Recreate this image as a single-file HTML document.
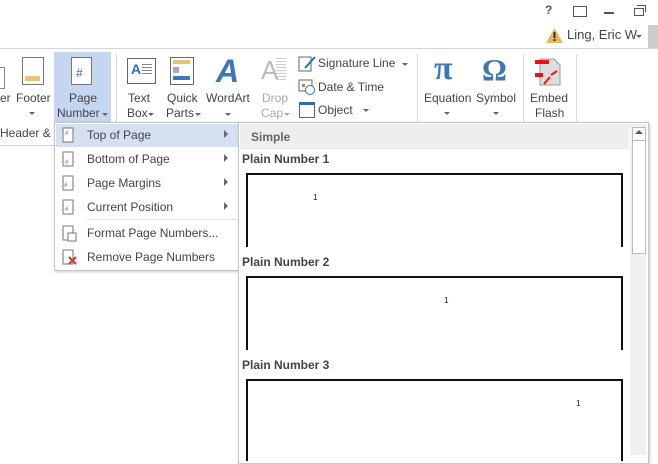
<!DOCTYPE html><html><head><style>
body{margin:0;width:658px;height:455px;position:relative;overflow:hidden;background:#fff;font-family:"Liberation Sans",sans-serif;font-size:12px;color:#444}
.a{position:absolute}
.t{position:absolute;font-size:12px;color:#444;white-space:nowrap}
.dd{position:absolute;width:0;height:0;border-left:3px solid transparent;border-right:3px solid transparent;border-top:3px solid #666}
</style></head><body>
<div class="t" style="left:545px;top:3px;font-weight:bold;color:#555">?</div>
<div class="a" style="left:573px;top:6px;width:12px;height:9px;border:1px solid #555"></div>
<div class="a" style="left:604px;top:12px;width:10px;height:2px;background:#555"></div>
<div class="a" style="left:634px;top:8px;width:8px;height:6px;border:1px solid #555"></div>
<div class="a" style="left:637px;top:5px;width:8px;height:6px;border-top:1px solid #555;border-right:1px solid #555"></div>
<svg class="a" style="left:546px;top:28px" width="17" height="15"><polygon points="8.5,0 17,15 0,15" fill="#e6b85c"/><rect x="7.5" y="4" width="2" height="6" fill="#333"/><rect x="7.5" y="11" width="2" height="2" fill="#333"/></svg>
<div class="t" style="left:567px;top:27px;font-size:13px">Ling, Eric W</div>
<div class="dd" style="left:636px;top:35px"></div>
<div class="a" style="left:648px;top:25px;width:10px;height:23px;background:#ccc"></div>
<div class="a" style="left:0;top:48px;width:658px;height:1px;background:#d4d4d4"></div>
<div class="a" style="left:54px;top:52px;width:57px;height:70px;background:#c5d7f0"></div>
<div class="a" style="left:0;top:67px;width:4px;height:20px;border:1px solid #888;border-left:none"></div>
<div class="t" style="left:0;top:91px">er</div>
<div class="a" style="left:22px;top:57px;width:20px;height:26px;border:1px solid #777;background:#fff"></div>
<div class="a" style="left:25px;top:76px;width:15px;height:5px;background:#e8c27a"></div>
<div class="t" style="left:16px;top:91px">Footer</div>
<div class="dd" style="left:29px;top:112px"></div>
<div class="a" style="left:71px;top:57px;width:19px;height:26px;border:1px solid #777;background:#fff"></div>
<div class="t" style="left:76px;top:66px;font-size:12px;color:#2e6db4">#</div>
<div class="t" style="left:69px;top:91px">Page</div>
<div class="t" style="left:57px;top:106px">Number</div>
<div class="dd" style="left:102px;top:113px"></div>
<div class="t" style="left:0;top:126px">Header &amp; F</div>
<div class="a" style="left:116px;top:54px;width:1px;height:68px;background:#ddd"></div>
<div class="a" style="left:127px;top:58px;width:27px;height:24px;border:1px solid #666;background:#fff"></div>
<div class="t" style="left:131px;top:61px;color:#2e6db4;font-size:14px;font-weight:bold">A</div>
<div class="a" style="left:142px;top:64px;width:10px;height:12px;background:repeating-linear-gradient(#888 0 1px,transparent 1px 3px)"></div>
<div class="t" style="left:128px;top:91px">Text</div>
<div class="t" style="left:127px;top:106px">Box</div><div class="dd" style="left:148px;top:113px"></div>
<div class="a" style="left:170px;top:57px;width:22px;height:26px;border:1px solid #666;background:#fff"></div>
<div class="a" style="left:173px;top:60px;width:17px;height:4px;background:#e8c27a"></div>
<div class="a" style="left:173px;top:67px;width:6px;height:6px;background:#aaa"></div>
<div class="a" style="left:173px;top:76px;width:17px;height:4px;background:#3d77b8"></div>
<div class="t" style="left:167px;top:91px">Quick</div>
<div class="t" style="left:166px;top:106px">Parts</div><div class="dd" style="left:195px;top:113px"></div>
<div class="t" style="left:216px;top:53px;font-size:32px;color:#3d77b8;font-style:italic;font-weight:bold">A</div>
<div class="t" style="left:206px;top:91px">WordArt</div><div class="dd" style="left:225px;top:113px"></div>
<div class="t" style="left:261px;top:55px;font-size:26px;color:#bbb">A</div>
<div class="a" style="left:276px;top:58px;width:10px;height:22px;background:repeating-linear-gradient(#ccc 0 1px,transparent 1px 3px)"></div>
<div class="t" style="left:262px;top:91px;color:#aaa">Drop</div>
<div class="t" style="left:261px;top:106px;color:#aaa">Cap</div><div class="dd" style="left:284px;top:113px;border-top-color:#aaa"></div>
<svg class="a" style="left:298px;top:55px" width="20" height="18"><rect x="1" y="2" width="12" height="14" fill="#fff" stroke="#666"/><path d="M7 13 L17 2" stroke="#2e6db4" stroke-width="2"/></svg>
<div class="t" style="left:318px;top:56px">Signature Line</div><div class="dd" style="left:402px;top:63px"></div>
<svg class="a" style="left:298px;top:78px" width="18" height="18"><rect x="1" y="2" width="13" height="11" fill="#fff" stroke="#666"/><rect x="4" y="6" width="3" height="3" fill="#e07b2e"/><circle cx="12" cy="12" r="4.5" fill="#fff" stroke="#2e6db4"/></svg>
<div class="t" style="left:318px;top:80px">Date &amp; Time</div>
<div class="a" style="left:299px;top:102px;width:14px;height:12px;border:1px solid #2e6db4;border-top-width:3px;background:#fff"></div>
<div class="t" style="left:318px;top:103px">Object</div><div class="dd" style="left:363px;top:109px"></div>
<div class="a" style="left:417px;top:54px;width:1px;height:68px;background:#ddd"></div>
<div class="t" style="left:434px;top:50px;font-size:34px;color:#3d77b8;font-family:'Liberation Serif',serif;font-weight:bold">π</div>
<div class="t" style="left:424px;top:91px">Equation</div><div class="dd" style="left:444px;top:112px"></div>
<div class="t" style="left:482px;top:52px;font-size:31px;color:#3d77b8;font-family:'Liberation Serif',serif;font-weight:bold">Ω</div>
<div class="t" style="left:476px;top:91px">Symbol</div><div class="dd" style="left:493px;top:112px"></div>
<div class="a" style="left:523px;top:54px;width:1px;height:68px;background:#ddd"></div>
<svg class="a" style="left:535px;top:57px" width="30" height="30"><path d="M5 2 H19 L25 8 V28 H5 Z" fill="#ddd" stroke="#999"/><rect x="0" y="3" width="14" height="4" fill="#e11"/><rect x="0" y="16" width="8" height="4" fill="#e11"/><path d="M9 27 L15 20 M16 18 L22 14" stroke="#e11" stroke-width="2"/></svg>
<div class="t" style="left:530px;top:91px">Embed</div>
<div class="t" style="left:535px;top:106px">Flash</div>
<div class="a" style="left:576px;top:54px;width:1px;height:68px;background:#ddd"></div>
<div class="a" style="left:0;top:145px;width:54px;height:1px;background:#d4d4d4"></div>
<div class="a" style="left:54px;top:122px;width:184px;height:147px;background:#fff;border:1px solid #c6c6c6;box-shadow:1px 1px 3px rgba(0,0,0,.2)"></div>
<div class="a" style="left:56px;top:124px;width:182px;height:23px;background:#d5e1f2"></div>
<div class="t" style="left:87px;top:128px">Top of Page</div>
<div class="t" style="left:87px;top:152px">Bottom of Page</div>
<div class="t" style="left:87px;top:176px">Page Margins</div>
<div class="t" style="left:87px;top:200px">Current Position</div>
<div class="a" style="left:87px;top:219px;width:150px;height:1px;background:#e0e0e0"></div>
<div class="t" style="left:87px;top:226px">Format Page Numbers...</div>
<div class="t" style="left:87px;top:250px">Remove Page Numbers</div>
<svg class="a" style="left:222px;top:129px" width="8" height="110"><path d="M2 1 L6 5 L2 9Z M2 25 L6 29 L2 33Z M2 49 L6 53 L2 57Z M2 73 L6 77 L2 81Z" fill="#666"/></svg>
<svg class="a" style="left:60px;top:127px" width="18" height="145" fill="none" stroke="#777"><rect x="3" y="1" width="10" height="14" fill="#fff"/><rect x="3" y="25" width="10" height="14" fill="#fff"/><rect x="3" y="49" width="10" height="14" fill="#fff"/><rect x="3" y="73" width="10" height="14" fill="#fff"/><rect x="3" y="99" width="10" height="14" fill="#fff"/><rect x="8" y="106" width="8" height="8" fill="#fff"/><rect x="3" y="123" width="10" height="14" fill="#fff"/><path d="M9 130 L16 137 M16 130 L9 137" stroke="#d33" stroke-width="2"/><text x="5" y="8" font-size="6" fill="#2e6db4" stroke="none">#</text><text x="5" y="37" font-size="6" fill="#2e6db4" stroke="none">#</text><text x="4" y="60" font-size="6" fill="#2e6db4" stroke="none">#</text><text x="5" y="84" font-size="6" fill="#2e6db4" stroke="none">#</text></svg>
<div class="a" style="left:238px;top:122px;width:409px;height:340px;background:#fff;border:1px solid #c6c6c6;box-shadow:1px 1px 3px rgba(0,0,0,.2)"></div>
<div class="a" style="left:240px;top:124px;width:389px;height:25px;background:#eeeeee"></div>
<div class="t" style="left:251px;top:130px;font-weight:bold;color:#666">Simple</div>
<div class="a" style="left:630px;top:124px;width:16px;height:331px;background:#f0f0f0"></div>
<div class="a" style="left:632px;top:127px;width:12px;height:12px;border:1px solid #bbb;background:#fff"></div>
<div class="a" style="left:635px;top:130px;border-left:4px solid transparent;border-right:4px solid transparent;border-bottom:4px solid #555"></div>
<div class="a" style="left:632px;top:140px;width:12px;height:112px;border:1px solid #bbb;background:#fff"></div>
<div class="t" style="left:242px;top:152px;font-weight:bold">Plain Number 1</div>
<div class="a" style="left:246px;top:173px;width:373px;height:72px;border:2px solid #111;border-bottom:none"></div>
<div class="t" style="left:313px;top:193px;font-size:8px;color:#111">1</div>
<div class="t" style="left:242px;top:255px;font-weight:bold">Plain Number 2</div>
<div class="a" style="left:246px;top:276px;width:373px;height:72px;border:2px solid #111;border-bottom:none"></div>
<div class="t" style="left:444px;top:296px;font-size:8px;color:#111">1</div>
<div class="t" style="left:242px;top:358px;font-weight:bold">Plain Number 3</div>
<div class="a" style="left:246px;top:379px;width:373px;height:80px;border:2px solid #111;border-bottom:none"></div>
<div class="t" style="left:576px;top:399px;font-size:8px;color:#111">1</div>
</body></html>
